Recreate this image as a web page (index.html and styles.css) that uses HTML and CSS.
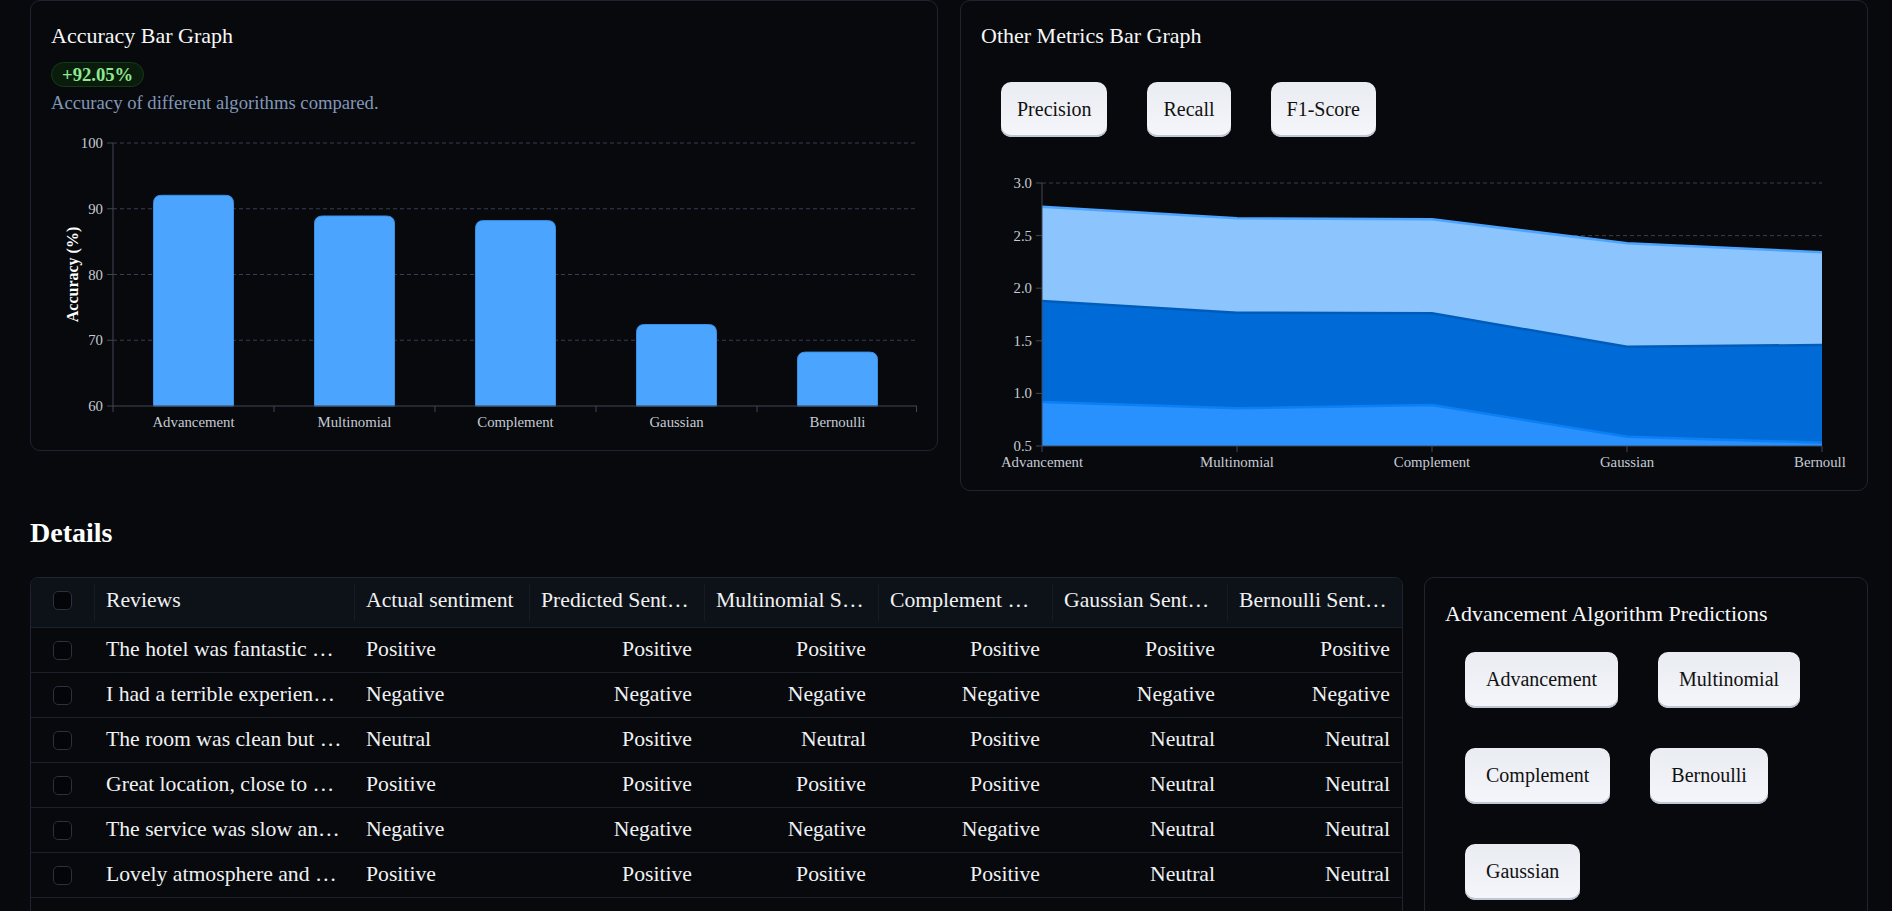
FILE: index.html
```html
<!DOCTYPE html>
<html lang="en">
<head>
<meta charset="utf-8">
<title>Sentiment Analysis Dashboard</title>
<link rel="stylesheet" href="styles.css">
</head>
<body>
<main class="page">
  <section class="charts">
    <article class="card">
      <h3 class="card-title">Accuracy Bar Graph</h3>
      <span class="badge">+92.05%</span>
      <p class="card-sub">Accuracy of different algorithms compared.</p>
      <svg class="chart" width="866" height="316" viewBox="0 0 866 316">
        <g class="grid">
          <line x1="62" x2="866" y1="29" y2="29"/>
          <line x1="62" x2="866" y1="94.75" y2="94.75"/>
          <line x1="62" x2="866" y1="160.5" y2="160.5"/>
          <line x1="62" x2="866" y1="226.25" y2="226.25"/>
        </g>
        <g class="bars">
          <path d="M102.5,292 V89.3 Q102.5,81.3 110.5,81.3 H174.5 Q182.5,81.3 182.5,89.3 V292 Z"/>
          <path d="M263.5,292 V110 Q263.5,102 271.5,102 H335.5 Q343.5,102 343.5,110 V292 Z"/>
          <path d="M424.5,292 V114.6 Q424.5,106.6 432.5,106.6 H496.5 Q504.5,106.6 504.5,114.6 V292 Z"/>
          <path d="M585.5,292 V218.5 Q585.5,210.5 593.5,210.5 H657.5 Q665.5,210.5 665.5,218.5 V292 Z"/>
          <path d="M746.5,292 V246.1 Q746.5,238.1 754.5,238.1 H818.5 Q826.5,238.1 826.5,246.1 V292 Z"/>
        </g>
        <g class="axis">
          <line x1="62" x2="62" y1="29" y2="292"/>
          <line x1="62" x2="866" y1="292" y2="292"/>
          <line x1="56" x2="62" y1="29" y2="29"/>
          <line x1="56" x2="62" y1="94.75" y2="94.75"/>
          <line x1="56" x2="62" y1="160.5" y2="160.5"/>
          <line x1="56" x2="62" y1="226.25" y2="226.25"/>
          <line x1="56" x2="62" y1="292" y2="292"/>
          <line x1="62" x2="62" y1="292" y2="298"/>
          <line x1="223" x2="223" y1="292" y2="298"/>
          <line x1="384" x2="384" y1="292" y2="298"/>
          <line x1="545" x2="545" y1="292" y2="298"/>
          <line x1="706" x2="706" y1="292" y2="298"/>
          <line x1="865.5" x2="865.5" y1="292" y2="298"/>
        </g>
        <g class="ticks ticks-y">
          <text x="52" y="34">100</text>
          <text x="52" y="99.75">90</text>
          <text x="52" y="165.5">80</text>
          <text x="52" y="231.25">70</text>
          <text x="52" y="297">60</text>
        </g>
        <g class="ticks ticks-x">
          <text x="142.5" y="313">Advancement</text>
          <text x="303.5" y="313">Multinomial</text>
          <text x="464.5" y="313">Complement</text>
          <text x="625.5" y="313">Gaussian</text>
          <text x="786.5" y="313">Bernoulli</text>
        </g>
        <text class="axis-title" transform="translate(23,160.5) rotate(-90)" x="0" y="3.5">Accuracy (%)</text>
      </svg>
    </article>

    <article class="card">
      <h3 class="card-title">Other Metrics Bar Graph</h3>
      <div class="btn-row">
        <button class="btn" type="button">Precision</button>
        <button class="btn" type="button">Recall</button>
        <button class="btn" type="button">F1-Score</button>
      </div>
      <svg class="chart" width="865" height="313" viewBox="0 0 865 313">
        <g class="grid">
          <line x1="61" x2="841" y1="26" y2="26"/>
          <line x1="61" x2="841" y1="78.6" y2="78.6"/>
          <line x1="61" x2="841" y1="131.2" y2="131.2"/>
          <line x1="61" x2="841" y1="183.8" y2="183.8"/>
          <line x1="61" x2="841" y1="236.4" y2="236.4"/>
        </g>
        <path class="area-f1" d="M61,49.7 L256,61.3 L451,62.3 L646,86.3 L841,95.3 L841,289 L61,289 Z"/>
        <path class="area-recall" d="M61,144 L256,155.7 L451,156.3 L646,189.7 L841,188 L841,289 L61,289 Z"/>
        <path class="area-precision" d="M61,245 L256,251.3 L451,248 L646,279.7 L841,285.7 L841,289 L61,289 Z"/>
        <path class="line-f1" d="M61,49.7 L256,61.3 L451,62.3 L646,86.3 L841,95.3"/>
        <path class="line-recall" d="M61,144 L256,155.7 L451,156.3 L646,189.7 L841,188"/>
        <path class="line-precision" d="M61,245 L256,251.3 L451,248 L646,279.7 L841,285.7"/>
        <g class="axis">
          <line x1="61" x2="61" y1="26" y2="289"/>
          <line x1="61" x2="841" y1="289" y2="289"/>
          <line x1="55" x2="61" y1="26" y2="26"/>
          <line x1="55" x2="61" y1="78.6" y2="78.6"/>
          <line x1="55" x2="61" y1="131.2" y2="131.2"/>
          <line x1="55" x2="61" y1="183.8" y2="183.8"/>
          <line x1="55" x2="61" y1="236.4" y2="236.4"/>
          <line x1="55" x2="61" y1="289" y2="289"/>
          <line x1="61" x2="61" y1="289" y2="295"/>
          <line x1="256" x2="256" y1="289" y2="295"/>
          <line x1="451" x2="451" y1="289" y2="295"/>
          <line x1="646" x2="646" y1="289" y2="295"/>
          <line x1="841" x2="841" y1="289" y2="295"/>
        </g>
        <g class="ticks ticks-y">
          <text x="51" y="31">3.0</text>
          <text x="51" y="83.6">2.5</text>
          <text x="51" y="136.2">2.0</text>
          <text x="51" y="188.8">1.5</text>
          <text x="51" y="241.4">1.0</text>
          <text x="51" y="294">0.5</text>
        </g>
        <g class="ticks ticks-x">
          <text x="61" y="310">Advancement</text>
          <text x="256" y="310">Multinomial</text>
          <text x="451" y="310">Complement</text>
          <text x="646" y="310">Gaussian</text>
          <text x="841" y="310">Bernoulli</text>
        </g>
      </svg>
    </article>
  </section>

  <h2 class="section-title">Details</h2>

  <section class="details">
    <div class="data-grid" role="table">
      <div class="row head" role="row">
        <div class="cell check" role="columnheader"><span class="box"></span></div>
        <div class="cell hcell" role="columnheader">Reviews</div>
        <div class="cell hcell" role="columnheader">Actual sentiment</div>
        <div class="cell hcell" role="columnheader">Predicted Sentiment</div>
        <div class="cell hcell" role="columnheader">Multinomial Sentiment</div>
        <div class="cell hcell" role="columnheader">Complement Sentiment</div>
        <div class="cell hcell" role="columnheader">Gaussian Sentiment</div>
        <div class="cell hcell" role="columnheader">Bernoulli Sentiment</div>
      </div>
      <div class="row" role="row">
        <div class="cell check"><span class="box"></span></div>
        <div class="cell">The hotel was fantastic and the staff were very friendly.</div>
        <div class="cell">Positive</div>
        <div class="cell num">Positive</div>
        <div class="cell num">Positive</div>
        <div class="cell num">Positive</div>
        <div class="cell num">Positive</div>
        <div class="cell num">Positive</div>
      </div>
      <div class="row" role="row">
        <div class="cell check"><span class="box"></span></div>
        <div class="cell">I had a terrible experience with the booking service.</div>
        <div class="cell">Negative</div>
        <div class="cell num">Negative</div>
        <div class="cell num">Negative</div>
        <div class="cell num">Negative</div>
        <div class="cell num">Negative</div>
        <div class="cell num">Negative</div>
      </div>
      <div class="row" role="row">
        <div class="cell check"><span class="box"></span></div>
        <div class="cell">The room was clean but the bed was uncomfortable.</div>
        <div class="cell">Neutral</div>
        <div class="cell num">Positive</div>
        <div class="cell num">Neutral</div>
        <div class="cell num">Positive</div>
        <div class="cell num">Neutral</div>
        <div class="cell num">Neutral</div>
      </div>
      <div class="row" role="row">
        <div class="cell check"><span class="box"></span></div>
        <div class="cell">Great location, close to all the major attractions.</div>
        <div class="cell">Positive</div>
        <div class="cell num">Positive</div>
        <div class="cell num">Positive</div>
        <div class="cell num">Positive</div>
        <div class="cell num">Neutral</div>
        <div class="cell num">Neutral</div>
      </div>
      <div class="row" role="row">
        <div class="cell check"><span class="box"></span></div>
        <div class="cell">The service was slow and the food was cold.</div>
        <div class="cell">Negative</div>
        <div class="cell num">Negative</div>
        <div class="cell num">Negative</div>
        <div class="cell num">Negative</div>
        <div class="cell num">Neutral</div>
        <div class="cell num">Neutral</div>
      </div>
      <div class="row" role="row">
        <div class="cell check"><span class="box"></span></div>
        <div class="cell">Lovely atmosphere and delicious breakfast.</div>
        <div class="cell">Positive</div>
        <div class="cell num">Positive</div>
        <div class="cell num">Positive</div>
        <div class="cell num">Positive</div>
        <div class="cell num">Neutral</div>
        <div class="cell num">Neutral</div>
      </div>
      <div class="row" role="row">
        <div class="cell check"><span class="box"></span></div>
        <div class="cell">Overpriced for what you get, would not return.</div>
        <div class="cell">Negative</div>
        <div class="cell num">Negative</div>
        <div class="cell num">Negative</div>
        <div class="cell num">Negative</div>
        <div class="cell num">Neutral</div>
        <div class="cell num">Neutral</div>
      </div>
      <div class="row" role="row">
        <div class="cell check"><span class="box"></span></div>
        <div class="cell">Friendly staff and a comfortable stay.</div>
        <div class="cell">Positive</div>
        <div class="cell num">Positive</div>
        <div class="cell num">Positive</div>
        <div class="cell num">Positive</div>
        <div class="cell num">Neutral</div>
        <div class="cell num">Neutral</div>
      </div>
    </div>

    <aside class="panel">
      <h3 class="card-title panel-title">Advancement Algorithm Predictions</h3>
      <div class="btn-wrap">
        <button class="btn btn-wide" type="button">Advancement</button>
        <button class="btn btn-wide" type="button">Multinomial</button>
        <button class="btn btn-wide" type="button">Complement</button>
        <button class="btn btn-wide" type="button">Bernoulli</button>
        <button class="btn btn-wide" type="button">Gaussian</button>
      </div>
    </aside>
  </section>
</main>
</body>
</html>
```

FILE: styles.css
```css
html {
  scrollbar-width: none;
}

body {
  margin: 0;
  background: #07090d;
  color: #f2f3f5;
  font-family: "Liberation Serif", "Times New Roman", serif;
}

.page {
  padding: 0 24px 0 30px;
}

.charts {
  display: grid;
  grid-template-columns: 1fr 1fr;
  gap: 22px;
  align-items: start;
}

.card {
  border: 1px solid #1f2530;
  border-radius: 10px;
  padding: 22px 20px 20px;
  display: flex;
  flex-direction: column;
  align-items: flex-start;
}

.card-title {
  margin: 0 0 13px;
  font-size: 22px;
  line-height: 26px;
  font-weight: normal;
  color: #f7f7f8;
}

.badge {
  box-sizing: border-box;
  height: 25px;
  padding: 0 10px;
  line-height: 23px;
  border: 1px solid #143a18;
  border-radius: 13px;
  background: #0a1d0d;
  color: #8fe98f;
  font-weight: bold;
  font-size: 18.67px;
  margin-bottom: 5px;
}

.card-sub {
  margin: 0;
  font-size: 18.67px;
  line-height: 22px;
  color: #8297b8;
}

.chart {
  display: block;
  font-family: "Liberation Serif", "Times New Roman", serif;
}

.grid line {
  stroke: #363e50;
  stroke-width: 1;
  stroke-dasharray: 4 3;
}

.axis line {
  stroke: #3f4654;
  stroke-width: 1;
}

.bars path {
  fill: #4ba5ff;
  stroke: #3c8fe6;
  stroke-width: 1;
}

.ticks text {
  font-size: 14.8px;
  fill: #c6cbd4;
}

.ticks-y text {
  text-anchor: end;
}

.ticks-x text {
  text-anchor: middle;
}

.axis-title {
  font-size: 16px;
  font-weight: bold;
  fill: #ffffff;
  text-anchor: middle;
}

.area-f1 { fill: #8cc4fd; }
.area-recall { fill: #006bd6; }
.area-precision { fill: #2991fd; }

.line-f1, .line-recall, .line-precision {
  fill: none;
  stroke-width: 2.5;
  stroke-linejoin: round;
}
.line-f1 { stroke: #4ca4ff; }
.line-recall { stroke: #005cba; }
.line-precision { stroke: #0b80f6; }

.btn-row {
  display: flex;
}

.btn {
  margin: 20px;
  padding: 16px;
  border: 0;
  border-radius: 10px;
  background: linear-gradient(#e9ecf2, #f5f6fa);
  box-shadow: inset 0 -2px 0 #bfc6d5;
  color: #111111;
  font-family: "Liberation Serif", "Times New Roman", serif;
  font-size: 20px;
  line-height: 23px;
}

.btn-wide {
  padding: 16px 21px 17px;
}

.section-title {
  margin: 26px 0 28px;
  font-size: 28px;
  line-height: 32px;
  font-weight: bold;
  color: #ffffff;
}

.details {
  display: flex;
  gap: 21px;
  align-items: flex-start;
}

.data-grid {
  flex: 1;
  border: 1px solid #1e2430;
  border-radius: 8px;
  overflow: hidden;
}

.row {
  display: grid;
  grid-template-columns: 63px 260px 175px 175px 174px 174px 175px 175px;
  height: 45px;
  box-sizing: border-box;
  border-bottom: 1px solid #1b212b;
  align-items: center;
  font-size: 21.7px;
  color: #f0f1f3;
}

.row.head {
  height: 50px;
  background: #0d1118;
}

.cell {
  padding: 0 12px 2px;
  white-space: nowrap;
  overflow: hidden;
  text-overflow: ellipsis;
}

.head .cell {
  padding-bottom: 4px;
}

.hcell {
  position: relative;
  align-self: stretch;
  line-height: 45px;
}

.hcell::before {
  content: "";
  position: absolute;
  left: 0;
  top: 6px;
  bottom: 6px;
  width: 1px;
  background: #161b24;
}

.num {
  text-align: right;
}

.check {
  display: flex;
  justify-content: center;
  padding: 0;
}

.box {
  width: 19px;
  height: 19px;
  box-sizing: border-box;
  border: 1px solid #2b313d;
  border-radius: 5px;
  background: #040508;
}

.panel {
  width: 444px;
  box-sizing: border-box;
  border: 1px solid #1f2530;
  border-radius: 10px;
  padding: 23px 20px 20px;
}

.panel-title {
  margin-bottom: 5px;
}

.btn-wrap {
  display: flex;
  flex-wrap: wrap;
  align-items: flex-start;
}
```
